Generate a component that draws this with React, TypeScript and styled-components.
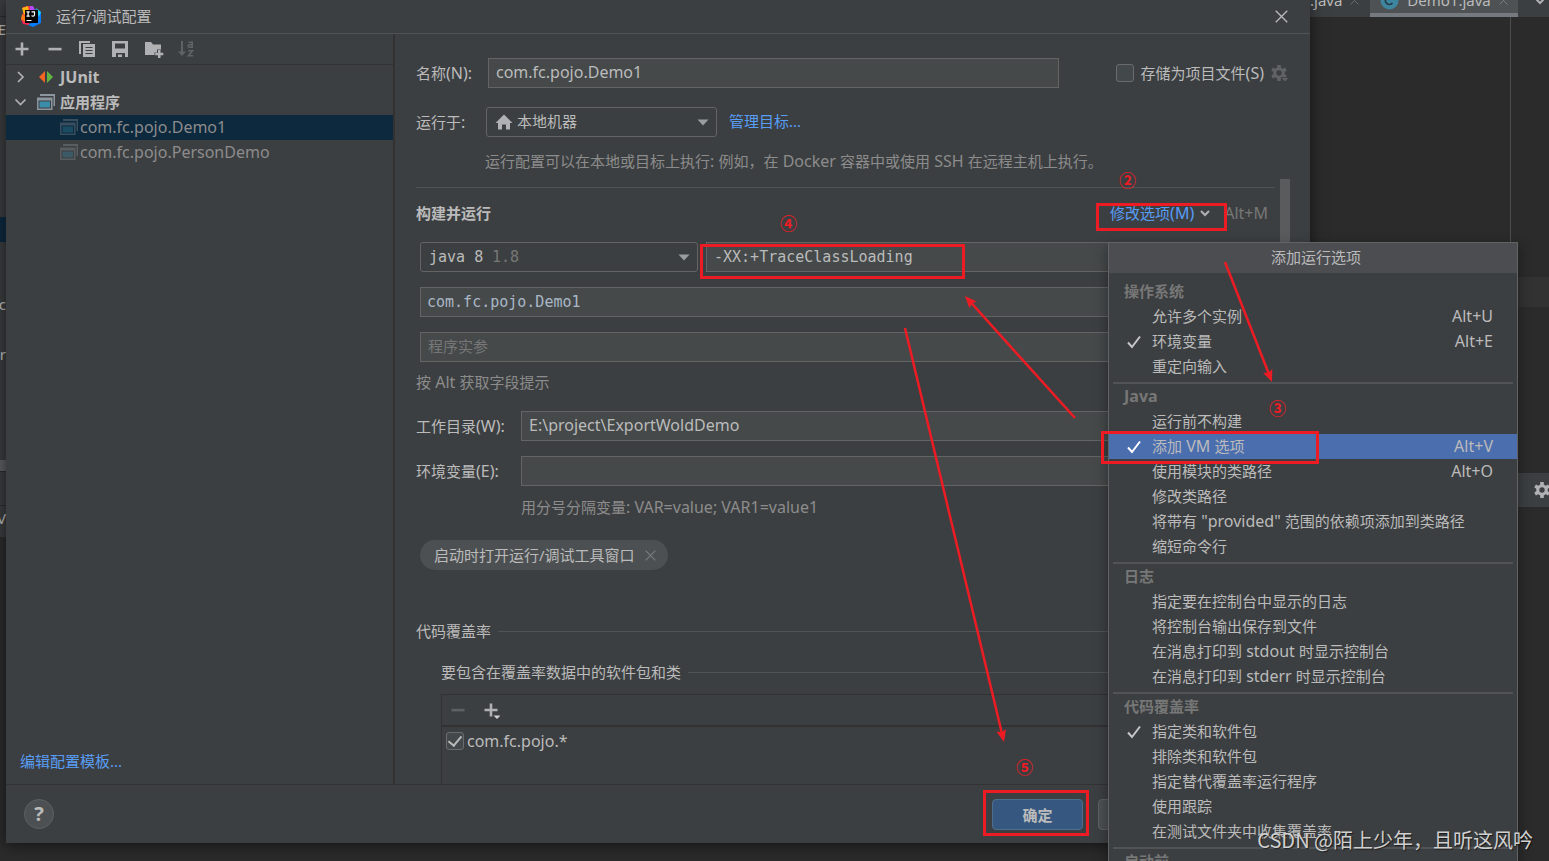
import React from "react";
import styled, { createGlobalStyle, css } from "styled-components";

const UI_FONT = `"Noto Sans", "Noto Sans CJK SC", sans-serif`;
const MONO_FONT = `"DejaVu Sans Mono", "Noto Sans CJK SC", monospace`;

const color = {
  panel: "#3c3f41",
  editor: "#2b2b2b",
  field: "#45494a",
  border: "#646464",
  line: "#515355",
  dark: "#323232",
  text: "#bbbbbb",
  dim: "#8c8c8c",
  faint: "#777777",
  link: "#589df6",
  selected: "#0d293e",
  menuSelected: "#4b6eaf",
  mark: "#ed1c24",
};

const GlobalStyle = createGlobalStyle`
  * { box-sizing: border-box; }
  body {
    margin: 0;
    background: ${color.editor};
    color: ${color.text};
    font: 15px/24px ${UI_FONT};
  }
  button, input, select { font: inherit; color: inherit; margin: 0; }
  button { background: none; border: 0; padding: 0; }
  a { color: ${color.link}; text-decoration: none; }
  svg { display: block; flex: none; }
`;

/* Latin runs are set one size larger than the Chinese text around them. */
const Latin = styled.span`
  font-size: 16px;
  line-height: 16px;
`;

const mixed = (text: string) =>
  text
    .split(/([\x20-\x7e]+)/)
    .map((part, i) => (i % 2 ? <Latin key={i}>{part}</Latin> : part));

const Desktop = styled.div`
  position: relative;
  height: 100vh;
  overflow: hidden;
  white-space: nowrap;
`;

/* ---------- IDE window behind the dialog ---------- */

const Ide = styled.div`
  display: flex;
  justify-content: space-between;
  height: 100%;
`;

const ProjectEdge = styled.div`
  width: 6px;
  overflow: hidden;
  display: flex;
  flex-direction: column;
  background: ${color.editor};
`;

const EdgeBlock = styled.div<{ $h: number; $bg?: string; $line?: boolean }>`
  flex: none;
  height: ${(p) => p.$h}px;
  background: ${(p) => p.$bg ?? "#393b3d"};
  border-bottom: ${(p) => (p.$line ? "1px solid #2b2b2b" : "0")};
  direction: rtl;
  overflow: hidden;
`;

const EditorSide = styled.div`
  width: 239px;
  display: flex;
  flex-direction: column;
`;

const TabBar = styled.div`
  display: flex;
  align-items: flex-end;
  height: 17px;
  background: ${color.panel};
  overflow: hidden;
`;

const Tab = styled.div<{ $active?: boolean }>`
  display: flex;
  align-items: center;
  gap: 8px;
  height: 30px;
  padding: 0 11px 0 0;
  border-bottom: 4px solid transparent;
  ${(p) =>
    p.$active &&
    css`
      padding: 0 10px;
      background: #4e5254;
      border-bottom-color: #747a80;
    `}
`;

const TabName = styled.span`
  font-size: 15px;
  line-height: 20px;
`;

const TabMenu = styled.div`
  display: flex;
  flex: 1;
  justify-content: flex-end;
  padding: 0 3px 10px 0;
`;

const EditorBody = styled.div`
  flex: 1;
  display: flex;
`;

const Gutter = styled.div`
  flex: 1;
  border-right: 1px solid #4d4d4d;
`;

const StripeColumn = styled.div`
  width: 38px;
  display: flex;
  flex-direction: column;
`;

const CaretLine = styled.div`
  height: 30px;
  margin-top: 260px;
  background: ${color.dark};
`;

const ToolHeader = styled.div`
  display: flex;
  align-items: center;
  height: 34px;
  margin-top: 166px;
  padding-left: 23px;
  background: ${color.panel};
`;

/* ---------- Dialog ---------- */

const Dialog = styled.section`
  position: absolute;
  inset: 0 239px 18px 6px;
  display: flex;
  flex-direction: column;
  background: ${color.panel};
  box-shadow: 0 2px 14px rgba(0, 0, 0, 0.55);
`;

const TitleBar = styled.header`
  display: flex;
  align-items: center;
  gap: 14px;
  height: 34px;
  padding: 0 22px 0 15px;
  border-bottom: 1px solid ${color.line};
`;

const Title = styled.h1`
  flex: 1;
  margin: 0;
  padding-bottom: 2px;
  font-size: 15px;
  font-weight: 400;
`;

const DialogBody = styled.div`
  flex: 1;
  min-height: 0;
  display: flex;
`;

const Sidebar = styled.aside`
  width: 389px;
  display: flex;
  flex-direction: column;
  border-right: 2px solid ${color.dark};
`;

const Toolbar = styled.div`
  display: flex;
  height: 31px;
  border-bottom: 1px solid ${color.dark};
`;

const ToolButton = styled.button`
  display: flex;
  align-items: center;
  width: 33px;
  padding-left: 7px;
`;

const Tree = styled.ul`
  flex: 1;
  margin: 0;
  padding: 0;
  list-style: none;
`;

const TreeRow = styled.li<{ $group?: boolean; $selected?: boolean }>`
  display: flex;
  align-items: center;
  gap: ${(p) => (p.$group ? 5 : 2)}px;
  height: 25px;
  padding: 0 0 2px ${(p) => (p.$group ? 8 : 54)}px;
  font-weight: ${(p) => (p.$group ? 700 : 400)};
  color: ${(p) => (p.$group ? color.text : color.dim)};
  background: ${(p) => (p.$selected ? color.selected : "transparent")};
`;

const Twisty = styled.span`
  width: 18px;
`;

const TemplatesLink = styled.a`
  padding: 0 14px 11px;
`;

const Main = styled.main`
  flex: 1;
  min-width: 0;
  display: flex;
  flex-direction: column;
  padding-left: 21px;
`;

const FormRow = styled.div<{ $top?: number }>`
  display: flex;
  align-items: center;
  height: 30px;
  margin-top: ${(p) => p.$top ?? 15}px;
`;

const Label = styled.label<{ $w: number }>`
  flex: none;
  width: ${(p) => p.$w}px;
`;

const Field = styled.input`
  flex: 1;
  min-width: 0;
  height: 30px;
  padding: 0 7px 2px;
  background: ${color.field};
  border: 1px solid ${color.border};
  border-radius: 0;
  outline: none;
  font-size: 16px;
`;

const MonoField = styled(Field)`
  padding: 0 7px;
  font: 15px ${MONO_FONT};
  &::placeholder { color: ${color.faint}; opacity: 1; }
`;

const ClassField = styled(MonoField)`
  padding: 0 6px;
  color: #a9b7c6;
`;

const StoreOption = styled.div`
  display: flex;
  align-items: center;
  gap: 7px;
  padding: 0 21px 0 57px;
`;

const CheckBox = styled.input`
  appearance: none;
  flex: none;
  display: grid;
  place-items: center;
  width: 18px;
  height: 18px;
  background: #43494a;
  border: 1px solid #6b6b6b;
  border-radius: 3px;
  &:checked::after {
    content: "";
    width: 6px;
    height: 11px;
    margin-bottom: 3px;
    border: solid ${color.text};
    border-width: 0 2px 2px 0;
    transform: rotate(40deg);
  }
`;

const SelectBox = styled.div<{ $w: number }>`
  position: relative;
  flex: none;
  width: ${(p) => p.$w}px;
  height: 30px;
`;

const Select = styled.select<{ $pad: number; $mono?: boolean }>`
  appearance: none;
  width: 100%;
  height: 30px;
  padding: 0 26px ${(p) => (p.$mono ? 0 : 2)}px ${(p) => p.$pad}px;
  background: ${color.panel};
  border: 1px solid ${color.border};
  border-radius: 3px;
  font-family: ${(p) => (p.$mono ? MONO_FONT : UI_FONT)};
`;

const SelectDecor = styled.span<{ $side: "left" | "right"; $inset: number }>`
  position: absolute;
  top: 0;
  ${(p) => p.$side}: ${(p) => p.$inset}px;
  height: 30px;
  display: flex;
  align-items: center;
  pointer-events: none;
  color: ${color.faint};
  font-family: ${MONO_FONT};
`;

const ManageLink = styled.a`
  margin-left: 12px;
  padding-bottom: 2px;
`;

const Hint = styled.p<{ $top: number; $left?: number }>`
  margin: ${(p) => p.$top}px 0 0 ${(p) => p.$left ?? 0}px;
  color: ${color.dim};
`;

const ScrollArea = styled.div`
  flex: 1;
  min-height: 0;
  margin-top: 6px;
  display: flex;
  overflow: hidden;
`;

const ScrollContent = styled.div`
  flex: 1;
  min-width: 0;
  display: flex;
  flex-direction: column;
  padding-top: 8px;
`;

const ScrollTrack = styled.div`
  width: 30px;
  margin-left: 5px;
`;

const ScrollThumb = styled.div`
  width: 10px;
  height: 360px;
  background: #595b5d;
`;

const BuildHeader = styled.div`
  display: flex;
  align-items: center;
  padding: 13px 7px 0 0;
  border-top: 1px solid ${color.line};
`;

const Heading = styled.h2`
  flex: 1;
  margin: 0;
  font-size: 15px;
  font-weight: 700;
`;

const ModifyButton = styled.button`
  display: flex;
  align-items: center;
  gap: 5px;
  color: ${color.link};
`;

const Shortcut = styled.span`
  margin-left: 13px;
  color: ${color.faint};
`;

const Fields = styled.div`
  padding: 2px 3px 0 4px;
`;

const Spacer = styled.span`
  width: 8px;
`;

const Chip = styled.div`
  display: flex;
  align-items: center;
  align-self: flex-start;
  gap: 10px;
  height: 30px;
  margin: 21px 0 0 4px;
  padding: 0 12px 0 14px;
  border-radius: 15px;
  background: #4c5052;
`;

const RuledTitle = styled.h3<{ $top: number; $left?: number }>`
  display: flex;
  align-items: center;
  gap: 7px;
  margin: ${(p) => p.$top}px 0 0 ${(p) => p.$left ?? 0}px;
  font-size: 15px;
  font-weight: 400;
  &::after {
    content: "";
    flex: 1;
    height: 1px;
    background: ${color.line};
  }
`;

const PatternBox = styled.div`
  flex: 1;
  margin: 10px 0 0 25px;
  border: 1px solid ${color.dark};
  border-bottom: 0;
`;

const PatternToolbar = styled(Toolbar)`
  height: 32px;
  border-bottom-width: 2px;
`;

const PatternRow = styled.label`
  display: flex;
  align-items: center;
  gap: 3px;
  height: 28px;
  padding: 0 4px;
`;

const Footer = styled.footer`
  display: flex;
  align-items: center;
  gap: 15px;
  height: 59px;
  padding: 0 15px 0 18px;
  border-top: 1px solid ${color.dark};
`;

const HelpButton = styled.button`
  width: 30px;
  height: 30px;
  margin-right: auto;
  border: 1px solid #5e6162;
  border-radius: 50%;
  background: #4c5052;
  font-size: 20px;
  font-weight: 700;
  line-height: 26px;
`;

const DialogButton = styled.button<{ $primary?: boolean }>`
  width: 91px;
  height: 31px;
  padding-top: 2px;
  border: 1px solid ${(p) => (p.$primary ? "#4c708c" : "#5e6060")};
  border-radius: 4px;
  background: ${(p) => (p.$primary ? "#365880" : "#4c5052")};
  font-weight: ${(p) => (p.$primary ? 700 : 400)};
`;

/* ---------- Options popup ---------- */

const Popup = styled.div`
  position: absolute;
  top: 242px;
  right: 31px;
  width: 410px;
  background: ${color.panel};
  border: 1px solid #616365;
  box-shadow: 0 4px 12px rgba(0, 0, 0, 0.4);
`;

const PopupTitle = styled.div`
  height: 30px;
  padding: 2px 0 0 6px;
  margin-bottom: 6px;
  text-align: center;
  background: #4b4d51;
`;

const Group = styled.div`
  & + &::before {
    content: "";
    display: block;
    height: 2px;
    margin: 3px 4px 0;
    background: ${color.line};
  }
`;

const GroupTitle = styled.div`
  height: 25px;
  padding-left: 15px;
  font-weight: 700;
  color: ${color.faint};
`;

const Option = styled.button<{ $selected?: boolean }>`
  display: flex;
  align-items: center;
  width: 100%;
  height: 25px;
  padding: 0 24px 0 18px;
  line-height: 22px;
  text-align: left;
  background: ${(p) => (p.$selected ? color.menuSelected : "transparent")};
`;

const OptionMark = styled.span`
  width: 25px;
`;

const OptionText = styled.span`
  padding-bottom: 2px;
`;

const OptionKeys = styled(OptionText)`
  margin-left: auto;
`;

/* ---------- Annotations ---------- */

const Marks = styled.svg`
  position: absolute;
  inset: 0;
  pointer-events: none;
`;

const Step = styled.span<{ $x: number; $y: number }>`
  position: absolute;
  left: ${(p) => p.$x}px;
  top: ${(p) => p.$y}px;
  color: ${color.mark};
  font: 700 17px/20px "Noto Sans CJK SC", sans-serif;
`;

const Watermark = styled.div`
  position: absolute;
  right: 16px;
  bottom: 6px;
  font: 20px/30px "Noto Sans CJK SC", sans-serif;
  color: #d0d0d0;
  text-shadow: 1px 1px 1px rgba(0, 0, 0, 0.6);
`;

/* ---------- Icons ---------- */

const G = "#afb1b3";

const PlusIcon = ({ menu }: { menu?: boolean }) => (
  <svg width="18" height="18" viewBox="0 0 18 18">
    <path d="M7.700 2.500h2.600v5.200h5.200v2.600h-5.200v5.200H7.700v-5.200H2.500V7.700h5.200z" fill={G} />
    {menu && <path d="M11.500 14.500h7l-3.500 3.500z" fill="#d0d2d4" />}
  </svg>
);

const MinusIcon = ({ off }: { off?: boolean }) => (
  <svg width="18" height="18" viewBox="0 0 18 18">
    <rect x="2.500" y="7.800" width="13" height="2.600" fill={off ? "#5e6162" : G} />
  </svg>
);

const CopyIcon = () => (
  <svg width="18" height="18" viewBox="0 0 18 18">
    <path d="M0 1h11v2H2v11H0z" fill={G} />
    <path d="M4 4h12v13H4z" fill={G} />
    <path d="M6.500 7.500h7M6.500 10.500h7M6.500 13.500h7" stroke={color.panel} strokeWidth="1.200" />
  </svg>
);

const SaveIcon = () => (
  <svg width="18" height="18" viewBox="0 0 18 18">
    <path d="M0 1h16v16h-3v-4H4v4H0zM3 3.500v5h10v-5z" fill={G} fillRule="evenodd" />
    <path d="M6 14.500h4V17H6z" fill={G} />
  </svg>
);

const FolderPlusIcon = () => (
  <svg width="20" height="18" viewBox="0 0 20 18">
    <path d="M0 2h6l2 2.500h8v5h-4v3H9.500V15H0z" fill={G} />
    <path d="M13 10h2.500v2.800h2.800v2.500h-2.800v2.700H13v-2.700h-2.800v-2.500H13z" fill={G} />
  </svg>
);

const SortIcon = () => (
  <svg width="18" height="18" viewBox="0 0 18 18" fill="none" stroke="#606365" strokeWidth="1.600">
    <path d="M4 1v13" strokeWidth="2" />
    <path d="M0 11.500h8L4 16z" fill="#606365" stroke="none" />
    <path d="M10.500 2.300h3.700v5h-2.700c-1.700 0-1.700-2.600 0-2.600h2.700M10.200 10.800h4.300l-4 5h4.500" />
  </svg>
);

const Chevron = ({ open, small }: { open?: boolean; small?: boolean }) => (
  <svg width={small ? 12 : 13} height="12" viewBox="0 0 12 12" fill="none" stroke={G} strokeWidth={small ? 2 : 1.7}>
    {open ? <path d={small ? "M2 4l4 4 4-4" : "M1 3.500l5 5 5-5"} /> : <path d="M3.500 1l5 5-5 5" />}
  </svg>
);

const JUnitIcon = () => (
  <svg width="18" height="18" viewBox="0 0 18 18">
    <path d="M8 3v12L2 9z" fill="#f26522" />
    <path d="M10 3v12l6-6z" fill="#62b543" />
  </svg>
);

const AppIcon = ({ faded }: { faded?: boolean }) => (
  <svg width="18" height="18" viewBox="0 0 18 18" opacity={faded ? 0.35 : 1}>
    <path d="M3 1h15v12h-1.500V3H3z" fill="#8b969e" />
    <path d="M0 4.500h15.500V17H0zM1.500 7.500v8H14v-8z" fill="#8b969e" fillRule="evenodd" />
    <rect x="2.500" y="8.500" width="10.500" height="6" fill="#3a8eaa" />
  </svg>
);

const HomeIcon = () => (
  <svg width="18" height="16" viewBox="0 0 18 16">
    <path d="M9 .5L17.500 9H15v6.500h-4V10.500H7v5H3V9H.5z" fill={G} />
  </svg>
);

const DropArrow = () => (
  <svg width="12" height="7" viewBox="0 0 12 7">
    <path d="M.5.5h11L6 6.500z" fill="#9a9da0" />
  </svg>
);

const Cross = ({ size, stroke, width = 1.2 }: { size: number; stroke: string; width?: number }) => (
  <svg width={size} height={size} viewBox="0 0 12 12" stroke={stroke} strokeWidth={width}>
    <path d="M.7.7l10.600 10.600M11.300.7L.7 11.300" />
  </svg>
);

const GearIcon = ({ fill, menu }: { fill: string; menu?: boolean }) => (
  <svg width="18" height="18" viewBox="0 0 18 18">
    <g fill={fill}>
      <circle cx="8" cy="9" r="5.800" />
      {[0, 60, 120].map((a) => (
        <rect key={a} x="6.200" y="1" width="3.600" height="16" rx=".5" transform={`rotate(${a} 8 9)`} />
      ))}
    </g>
    <circle cx="8" cy="9" r="2.700" fill={color.panel} />
    {menu && <path d="M10 13.500h8L14 18z" fill={fill} stroke={color.panel} strokeWidth=".8" />}
  </svg>
);

const CheckIcon = ({ bright }: { bright?: boolean }) => (
  <svg width="14" height="14" viewBox="0 0 14 14" fill="none" stroke={bright ? "#ffffff" : "#c4c6c8"} strokeWidth="2">
    <path d="M1 7.500l4 4.500L13 1.500" />
  </svg>
);

const IdeaLogo = () => (
  <svg width="21" height="21" viewBox="0 0 21 21">
    <path d="M2 1l7-1 3 5-4 14-6-1-2-5 2-4z" fill="#fe2857" />
    <path d="M1 2l6-2 1 5-5 4z" fill="#fdb60d" />
    <path d="M1 8l4 3-1 5-4-3z" fill="#f97a12" />
    <path d="M9 0h3l2 4-5 3z" fill="#b74af7" />
    <path d="M14 3l6 3v11l-8 4-5-2 8-5z" fill="#087cfa" />
    <path d="M15 2l5 4-2 5z" fill="#21d0f5" />
    <rect x="4" y="4" width="13" height="13" fill="#000" />
    <path d="M5.500 5.800h3.200M7.100 5.800v4.400M5.500 10.200h3.200M10.500 5.800h3v3c0 1.500-2 1.800-3 .8M5.500 14.500h5" stroke="#fff" strokeWidth="1.200" fill="none" />
  </svg>
);

const ClassIcon = () => (
  <svg width="19" height="19" viewBox="0 0 19 19">
    <circle cx="9.500" cy="9.500" r="9" fill="#3e86a0" />
    <path d="M12.500 7a4 4 0 1 0 0 5" fill="none" stroke="#243c46" strokeWidth="1.700" />
  </svg>
);

/* ---------- Data ---------- */

type MenuOption = { text: string; keys?: string; checked?: boolean; selected?: boolean };

const groups: { title: string; options: MenuOption[] }[] = [
  {
    title: "操作系统",
    options: [
      { text: "允许多个实例", keys: "Alt+U" },
      { text: "环境变量", keys: "Alt+E", checked: true },
      { text: "重定向输入" },
    ],
  },
  {
    title: "Java",
    options: [
      { text: "运行前不构建" },
      { text: "添加 VM 选项", keys: "Alt+V", checked: true, selected: true },
      { text: "使用模块的类路径", keys: "Alt+O" },
      { text: "修改类路径" },
      { text: '将带有 "provided" 范围的依赖项添加到类路径' },
      { text: "缩短命令行" },
    ],
  },
  {
    title: "日志",
    options: [
      { text: "指定要在控制台中显示的日志" },
      { text: "将控制台输出保存到文件" },
      { text: "在消息打印到 stdout 时显示控制台" },
      { text: "在消息打印到 stderr 时显示控制台" },
    ],
  },
  {
    title: "代码覆盖率",
    options: [
      { text: "指定类和软件包", checked: true },
      { text: "排除类和软件包" },
      { text: "指定替代覆盖率运行程序" },
      { text: "使用跟踪" },
      { text: "在测试文件夹中收集覆盖率" },
    ],
  },
  { title: "启动前", options: [] },
];

const MARK_WIDTH = 3;

/* Outer edges of each frame: left, top, right, bottom. */
const frames = [
  [1096, 203, 1227, 231],
  [700, 244, 965, 279],
  [1101, 431, 1319, 464],
  [983, 790, 1089, 836],
];

const arrows = [
  [1225, 262, 1272, 382],
  [1075, 418, 965, 296],
  [905, 328, 1004, 742],
];

const Frame = ({ edges }: { edges: number[] }) => {
  const [left, top, right, bottom] = edges;
  return (
    <rect
      x={left + MARK_WIDTH / 2}
      y={top + MARK_WIDTH / 2}
      width={right - left - MARK_WIDTH}
      height={bottom - top - MARK_WIDTH}
      fill="none"
      stroke={color.mark}
      strokeWidth={MARK_WIDTH}
    />
  );
};

const Arrow = ({ from }: { from: number[] }) => {
  const [x1, y1, x2, y2] = from;
  const angle = (Math.atan2(y2 - y1, x2 - x1) * 180) / Math.PI;
  const length = Math.hypot(x2 - x1, y2 - y1);
  return (
    <g transform={`translate(${x1} ${y1}) rotate(${angle})`}>
      <path d={`M0 0H${length - 8}`} stroke={color.mark} strokeWidth="2.500" />
      <path d={`M${length} 0l-12-5 2 5-2 5z`} fill={color.mark} />
    </g>
  );
};

/* ---------- Page ---------- */

export default function App() {
  return (
    <>
      <GlobalStyle />
      <Desktop>
        <Ide>
          <ProjectEdge>
            <EdgeBlock $h={17} $line />
            <EdgeBlock $h={200}>E</EdgeBlock>
            <EdgeBlock $h={25} $bg={color.selected} />
            <EdgeBlock $h={50} />
            <EdgeBlock $h={50}>c</EdgeBlock>
            <EdgeBlock $h={118}>r</EdgeBlock>
            <EdgeBlock $h={12} $bg="#5a5d5e" $line />
            <EdgeBlock $h={34} $line />
            <EdgeBlock $h={31}>V</EdgeBlock>
          </ProjectEdge>
          <EditorSide>
            <TabBar>
              <Tab>
                <TabName>.java</TabName>
                <Cross size={9} stroke="#6e7072" />
              </Tab>
              <Tab $active>
                <ClassIcon />
                <TabName>Demo1.java</TabName>
                <Cross size={9} stroke="#7e8082" />
              </Tab>
              <TabMenu>
                <Chevron open small />
              </TabMenu>
            </TabBar>
            <EditorBody>
              <Gutter />
              <StripeColumn>
                <CaretLine />
                <ToolHeader>
                  <GearIcon fill={G} />
                </ToolHeader>
              </StripeColumn>
            </EditorBody>
          </EditorSide>
        </Ide>

        <Dialog>
          <TitleBar>
            <IdeaLogo />
            <Title>运行/调试配置</Title>
            <button aria-label="关闭">
              <Cross size={13} stroke={color.text} />
            </button>
          </TitleBar>

          <DialogBody>
            <Sidebar>
              <Toolbar>
                <ToolButton aria-label="添加"><PlusIcon /></ToolButton>
                <ToolButton aria-label="移除"><MinusIcon /></ToolButton>
                <ToolButton aria-label="复制"><CopyIcon /></ToolButton>
                <ToolButton aria-label="保存"><SaveIcon /></ToolButton>
                <ToolButton aria-label="新建文件夹"><FolderPlusIcon /></ToolButton>
                <ToolButton aria-label="排序"><SortIcon /></ToolButton>
              </Toolbar>
              <Tree>
                <TreeRow $group>
                  <Twisty><Chevron /></Twisty>
                  <JUnitIcon />
                  <Latin>JUnit</Latin>
                </TreeRow>
                <TreeRow $group>
                  <Twisty><Chevron open /></Twisty>
                  <AppIcon />
                  应用程序
                </TreeRow>
                <TreeRow $selected>
                  <AppIcon faded />
                  <Latin>com.fc.pojo.Demo1</Latin>
                </TreeRow>
                <TreeRow>
                  <AppIcon faded />
                  <Latin>com.fc.pojo.PersonDemo</Latin>
                </TreeRow>
              </Tree>
              <TemplatesLink href="#templates">编辑配置模板...</TemplatesLink>
            </Sidebar>

            <Main>
              <FormRow $top={24}>
                <Label $w={72} htmlFor="name">{mixed("名称(N):")}</Label>
                <Field id="name" defaultValue="com.fc.pojo.Demo1" />
                <StoreOption>
                  <CheckBox type="checkbox" id="store" />
                  <label htmlFor="store">{mixed("存储为项目文件(S)")}</label>
                  <GearIcon fill="#606365" menu />
                </StoreOption>
              </FormRow>
              <FormRow $top={19}>
                <Label $w={70} htmlFor="target">{mixed("运行于:")}</Label>
                <SelectBox $w={231}>
                  <Select id="target" $pad={30}>
                    <option>本地机器</option>
                  </Select>
                  <SelectDecor $side="left" $inset={9}><HomeIcon /></SelectDecor>
                  <SelectDecor $side="right" $inset={8}><DropArrow /></SelectDecor>
                </SelectBox>
                <ManageLink href="#targets">管理目标...</ManageLink>
              </FormRow>
              <Hint $top={12} $left={69}>
                {mixed("运行配置可以在本地或目标上执行: 例如，在 Docker 容器中或使用 SSH 在远程主机上执行。")}
              </Hint>

              <ScrollArea>
                <ScrollContent>
                  <BuildHeader>
                    <Heading>构建并运行</Heading>
                    <ModifyButton>
                      <span>{mixed("修改选项(M)")}</span>
                      <Chevron open small />
                    </ModifyButton>
                    <Shortcut>{mixed("Alt+M")}</Shortcut>
                  </BuildHeader>
                  <Fields>
                    <FormRow>
                      <SelectBox $w={278}>
                        <Select aria-label="JRE" $pad={8} $mono>
                          <option>java 8</option>
                        </Select>
                        <SelectDecor $side="left" $inset={72}>1.8</SelectDecor>
                        <SelectDecor $side="right" $inset={8}><DropArrow /></SelectDecor>
                      </SelectBox>
                      <Spacer />
                      <MonoField aria-label="VM 选项" defaultValue="-XX:+TraceClassLoading" />
                    </FormRow>
                    <FormRow>
                      <ClassField aria-label="主类" defaultValue="com.fc.pojo.Demo1" />
                    </FormRow>
                    <FormRow>
                      <MonoField aria-label="程序实参" placeholder="程序实参" />
                    </FormRow>
                  </Fields>
                  <Hint $top={8}>{mixed("按 Alt 获取字段提示")}</Hint>
                  <FormRow $top={17}>
                    <Label $w={105} htmlFor="dir">{mixed("工作目录(W):")}</Label>
                    <Field id="dir" defaultValue="E:\project\ExportWoldDemo" />
                  </FormRow>
                  <FormRow>
                    <Label $w={105} htmlFor="env">{mixed("环境变量(E):")}</Label>
                    <Field id="env" />
                  </FormRow>
                  <Hint $top={9} $left={105}>{mixed("用分号分隔变量: VAR=value; VAR1=value1")}</Hint>
                  <Chip>
                    启动时打开运行/调试工具窗口
                    <button aria-label="移除选项">
                      <Cross size={11} stroke="#7a7d7f" />
                    </button>
                  </Chip>
                  <RuledTitle $top={49}>代码覆盖率</RuledTitle>
                  <RuledTitle $top={17} $left={25}>要包含在覆盖率数据中的软件包和类</RuledTitle>
                  <PatternBox>
                    <PatternToolbar>
                      <ToolButton aria-label="移除模式"><MinusIcon off /></ToolButton>
                      <ToolButton aria-label="添加模式"><PlusIcon menu /></ToolButton>
                    </PatternToolbar>
                    <PatternRow>
                      <CheckBox type="checkbox" defaultChecked />
                      <Latin>com.fc.pojo.*</Latin>
                    </PatternRow>
                  </PatternBox>
                </ScrollContent>
                <ScrollTrack>
                  <ScrollThumb />
                </ScrollTrack>
              </ScrollArea>
            </Main>
          </DialogBody>

          <Footer>
            <HelpButton aria-label="帮助">?</HelpButton>
            <DialogButton $primary>确定</DialogButton>
            <DialogButton>取消</DialogButton>
            <DialogButton>应用</DialogButton>
          </Footer>
        </Dialog>

        <Popup role="menu">
          <PopupTitle>添加运行选项</PopupTitle>
          {groups.map((group) => (
            <Group key={group.title}>
              <GroupTitle>{mixed(group.title)}</GroupTitle>
              {group.options.map((option) => (
                <Option key={option.text} role="menuitem" $selected={option.selected}>
                  <OptionMark>{option.checked && <CheckIcon bright={option.selected} />}</OptionMark>
                  <OptionText>{mixed(option.text)}</OptionText>
                  {option.keys && <OptionKeys>{mixed(option.keys)}</OptionKeys>}
                </Option>
              ))}
            </Group>
          ))}
        </Popup>

        <Marks width="100%" height="100%">
          {frames.map((edges) => (
            <Frame key={edges[0]} edges={edges} />
          ))}
          {arrows.map((a) => (
            <Arrow key={a[0]} from={a} />
          ))}
        </Marks>
        <Step $x={1119} $y={170}>②</Step>
        <Step $x={1269} $y={398}>③</Step>
        <Step $x={780} $y={213}>④</Step>
        <Step $x={1016} $y={757}>⑤</Step>
        <Watermark>CSDN @陌上少年，且听这风吟</Watermark>
      </Desktop>
    </>
  );
}
